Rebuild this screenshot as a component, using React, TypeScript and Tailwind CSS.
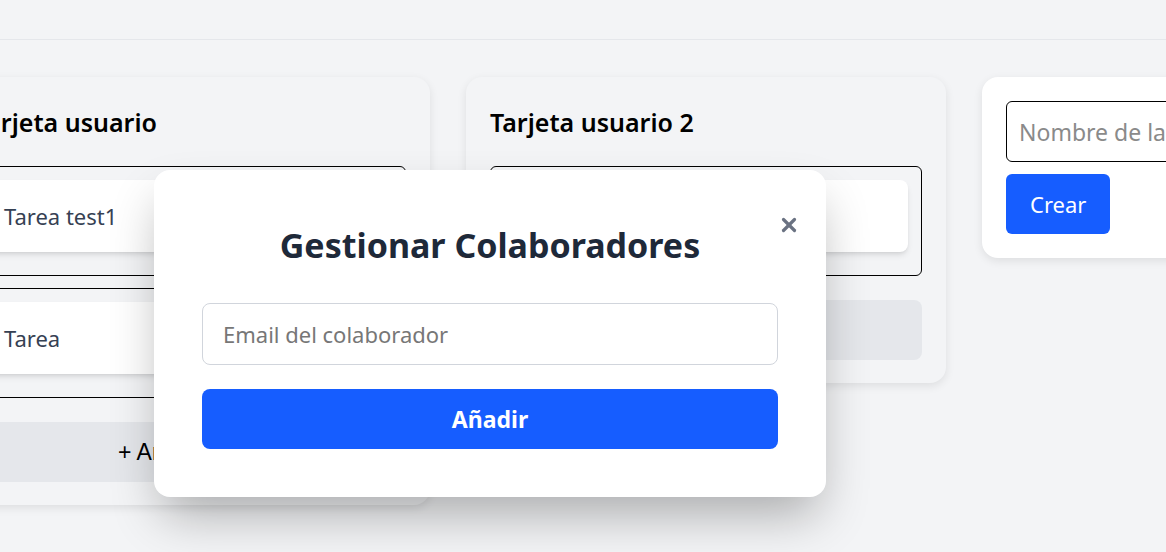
import { X } from "lucide-react";

const font = "font-['Noto_Sans',sans-serif]";

function TaskCard({ title }: { title: string }) {
  return (
    <div className="mb-[10px] rounded-lg bg-white px-4 py-[22px] text-[22px] leading-7 text-gray-700 shadow-md">
      {title}
    </div>
  );
}

function TaskBox({ tasks }: { tasks: string[] }) {
  return (
    <div className="rounded-md border border-black px-[13px] pt-[13px] pb-[13px]">
      {tasks.map((t) => (
        <TaskCard key={t} title={t} />
      ))}
    </div>
  );
}

function Column({ title, boxes }: { title: string; boxes: string[][] }) {
  return (
    <div className="flex w-[480px] shrink-0 flex-col self-start rounded-2xl bg-gray-100 px-6 pt-[29px] pb-[23px] shadow-[0_3px_10px_rgba(0,0,0,0.09)]">
      <h2 className="mb-[28px] text-[25px] leading-8 font-semibold text-black">{title}</h2>
      <div className="flex flex-col gap-3">
        {boxes.map((b, i) => (
          <TaskBox key={i} tasks={b} />
        ))}
      </div>
      <button className="mt-6 h-[60px] rounded-lg bg-gray-200 font-['Liberation_Sans',sans-serif] text-[23px] text-black">
        + Añadir tarea
      </button>
    </div>
  );
}

export default function App() {
  return (
    <div className={`relative h-[552px] w-[1166px] overflow-hidden bg-gray-100 ${font}`}>
      <header className="h-10 border-b border-gray-200 bg-gray-100" />

      <div className="-ml-[50px] flex items-start gap-9 pt-[37px]">
        <Column title="Tarjeta usuario" boxes={[["Tarea test1"], ["Tarea"]]} />
        <Column title="Tarjeta usuario 2" boxes={[["Tarea 3"]]} />

        <div className="flex w-[300px] shrink-0 flex-col items-start gap-3 rounded-2xl bg-white p-6 pb-6 shadow-[0_3px_10px_rgba(0,0,0,0.09)]">
          <input
            placeholder="Nombre de la tarjeta"
            className="h-[61px] w-full rounded-md border border-black px-3 text-[23px] text-gray-800 placeholder:text-[#8a8a8a]"
          />
          <button className="h-[60px] rounded-md bg-[#165dff] px-6 text-[22px] text-white">Crear</button>
        </div>
      </div>

      {/* modal de colaboradores */}
      <div className="absolute top-[170px] left-[154px] w-[672px] rounded-2xl bg-white px-12 pt-[57px] pb-12 shadow-[0_25px_50px_-8px_rgba(0,0,0,0.3)]">
        <button className="absolute top-[44px] right-[26px] text-gray-500" aria-label="Cerrar">
          <X className="size-[22px]" strokeWidth={3.5} />
        </button>
        <h2 className="mb-10 text-center text-[34px] leading-9 font-bold text-gray-800">Gestionar Colaboradores</h2>
        <input
          placeholder="Email del colaborador"
          className="h-[62px] w-full rounded-lg border border-gray-300 px-5 text-[22px] text-gray-800 placeholder:text-[#777]"
        />
        <button className="mt-6 h-[60px] w-full rounded-lg bg-[#165dff] text-[23px] font-bold text-white">Añadir</button>
      </div>
    </div>
  );
}
